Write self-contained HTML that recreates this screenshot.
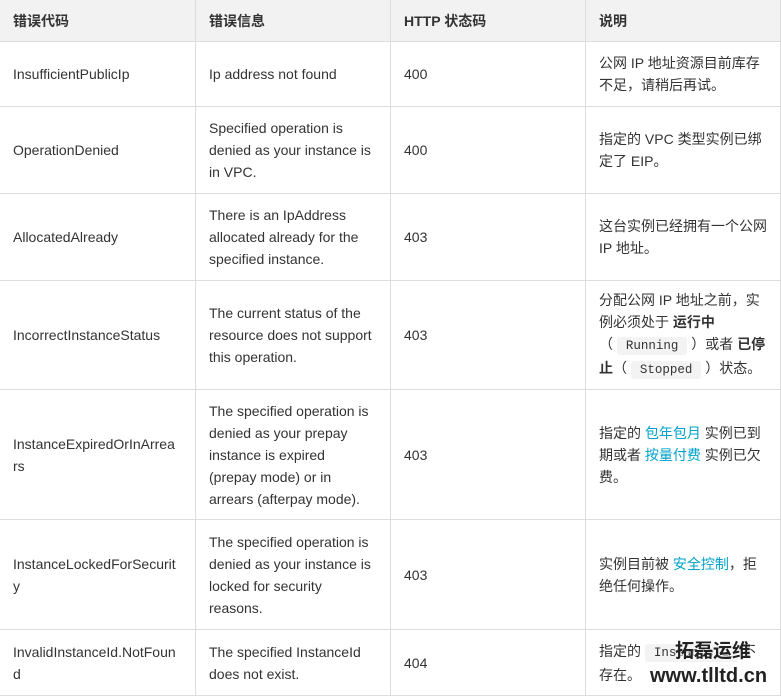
<!DOCTYPE html>
<html><head><meta charset="utf-8"><style>
body{margin:0;background:#fff;width:781px;height:696px;overflow:hidden;font-family:"Liberation Sans","Noto Sans CJK SC",sans-serif;font-size:14px;color:#333;}
table{border-collapse:collapse;table-layout:fixed;width:781px;position:absolute;left:-1px;top:-1px}
td,th{border:1px solid #ddd;padding:0 13px;line-height:22px;vertical-align:middle;text-align:left}
th{background:#f2f2f2;font-weight:bold;height:41px;padding-top:0}
.c{font-family:"Liberation Mono",monospace;font-size:12.5px;background:#f3f3f3;border-radius:3px;padding:2px 9px}
.b{font-weight:bold}
.l{color:#00a2ca}
.wm{position:absolute;left:650px;top:640px;font-weight:bold;color:#222;text-shadow:1px 1px 2px #fff;line-height:24px}
</style></head><body>
<table>
<colgroup><col style="width:196px"><col style="width:195px"><col style="width:195px"><col style="width:195px"></colgroup>
<tr><th>错误代码</th><th>错误信息</th><th>HTTP 状态码</th><th>说明</th></tr>
<tr style="height:65px"><td>InsufficientPublicIp</td><td>Ip address not found</td><td>400</td><td>公网 IP 地址资源目前库存不足，请稍后再试。</td></tr>
<tr style="height:87px"><td>OperationDenied</td><td>Specified operation is denied as your instance is in VPC.</td><td>400</td><td>指定的 VPC 类型实例已绑定了 EIP。</td></tr>
<tr style="height:87px"><td>AllocatedAlready</td><td>There is an IpAddress allocated already for the specified instance.</td><td>403</td><td>这台实例已经拥有一个公网 IP 地址。</td></tr>
<tr style="height:109px"><td>IncorrectInstanceStatus</td><td>The current status of the resource does not support this operation.</td><td>403</td><td style="white-space:nowrap">分配公网 IP 地址之前，实<br>例必须处于 <span class="b">运行中</span><br>（ <span class="c">Running</span> ）或者 <span class="b">已停</span><br><span class="b">止</span>（ <span class="c">Stopped</span> ）状态。</td></tr>
<tr style="height:130px"><td>InstanceExpiredOrInArrea<br>rs</td><td>The specified operation is denied as your prepay instance is expired<br>(prepay mode) or in<br>arrears (afterpay mode).</td><td>403</td><td>指定的 <span class="l">包年包月</span> 实例已到期或者 <span class="l">按量付费</span> 实例已欠费。</td></tr>
<tr style="height:110px"><td>InstanceLockedForSecurit<br>y</td><td>The specified operation is denied as your instance is locked for security reasons.</td><td>403</td><td>实例目前被 <span class="l">安全控制</span>，拒绝任何操作。</td></tr>
<tr style="height:66px"><td>InvalidInstanceId.NotFoun<br>d</td><td>The specified InstanceId does not exist.</td><td>404</td><td>指定的 <span class="c">InstanceId</span> 不存在。</td></tr>
</table>
<div class="wm"><span style="font-size:19px;margin-left:25px">拓磊运维</span><br><span style="font-size:20px">www.tlltd.cn</span></div>
</body></html>
